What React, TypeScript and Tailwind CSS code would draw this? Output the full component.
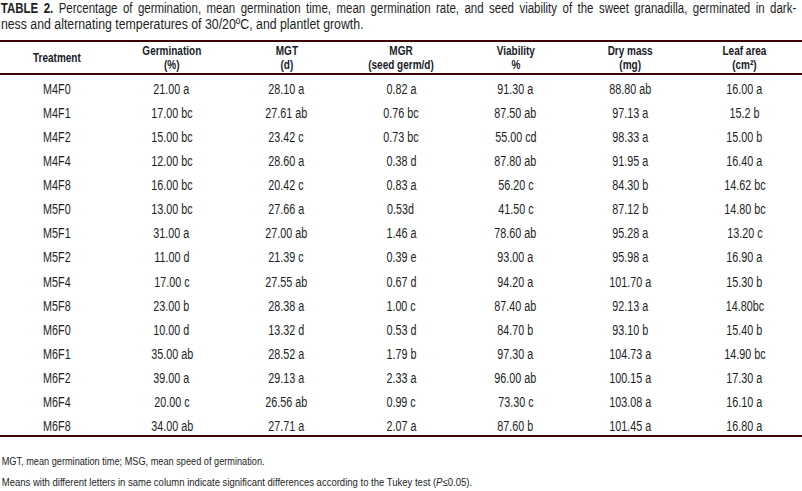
import React from "react";

const rows: string[][] = [
  ["M4F0", "21.00 a", "28.10 a", "0.82 a", "91.30 a", "88.80 ab", "16.00 a"],
  ["M4F1", "17.00 bc", "27.61 ab", "0.76 bc", "87.50 ab", "97.13 a", "15.2 b"],
  ["M4F2", "15.00 bc", "23.42 c", "0.73 bc", "55.00 cd", "98.33 a", "15.00 b"],
  ["M4F4", "12.00 bc", "28.60 a", "0.38 d", "87.80 ab", "91.95 a", "16.40 a"],
  ["M4F8", "16.00 bc", "20.42 c", "0.83 a", "56.20 c", "84.30 b", "14.62 bc"],
  ["M5F0", "13.00 bc", "27.66 a", "0.53d", "41.50 c", "87.12 b", "14.80 bc"],
  ["M5F1", "31.00 a", "27.00 ab", "1.46 a", "78.60 ab", "95.28 a", "13.20 c"],
  ["M5F2", "11.00 d", "21.39 c", "0.39 e", "93.00 a", "95.98 a", "16.90 a"],
  ["M5F4", "17.00 c", "27.55 ab", "0.67 d", "94.20 a", "101.70 a", "15.30 b"],
  ["M5F8", "23.00 b", "28.38 a", "1.00 c", "87.40 ab", "92.13 a", "14.80bc"],
  ["M6F0", "10.00 d", "13.32 d", "0.53 d", "84.70 b", "93.10 b", "15.40 b"],
  ["M6F1", "35.00 ab", "28.52 a", "1.79 b", "97.30 a", "104.73 a", "14.90 bc"],
  ["M6F2", "39.00 a", "29.13 a", "2.33 a", "96.00 ab", "100.15 a", "17.30 a"],
  ["M6F4", "20.00 c", "26.56 ab", "0.99 c", "73.30 c", "103.08 a", "16.10 a"],
  ["M6F8", "34.00 ab", "27.71 a", "2.07 a", "87.60 b", "101.45 a", "16.80 a"],
];

const headers: [string, string][] = [
  ["Treatment", ""],
  ["Germination", "(%)"],
  ["MGT", "(d)"],
  ["MGR", "(seed germ/d)"],
  ["Viability", "%"],
  ["Dry mass", "(mg)"],
  ["Leaf area", "(cm²)"],
];

export default function App() {
  return (
    <div
      className="w-[802px] h-[491px] bg-white overflow-hidden text-[#1e1e1e]"
      style={{ fontFamily: '"Liberation Sans", Arial, sans-serif' }}
    >
      {/* Caption: Arial-Narrow look via horizontal condensing */}
      <div className="text-[14px] leading-[16px]">
        <p className="w-[971px] pl-[1px] origin-top-left scale-x-[0.82] text-justify [text-align-last:justify]">
          <span className="font-bold">TABLE 2.</span> Percentage of germination, mean germination time, mean germination rate, and seed viability of the sweet granadilla, germinated in dark-
        </p>
        <p className="w-[900px] pl-[1px] origin-top-left scale-x-[0.88]">
          ness and alternating temperatures of 30/20ºC, and plantlet growth.
        </p>
      </div>
      <div className="mt-[8px] border-t-2 border-b-2 border-[#3a0606]">
        <div className="grid grid-cols-7 h-[33px] items-center border-b-2 border-[#3a0606] font-bold text-[12.5px] leading-[14px] text-[#1a1a28]">
          {headers.map(([a, b]) => (
            <div key={a} className="flex justify-center">
              <span className="inline-block text-center whitespace-nowrap scale-x-[0.8]">
                <span className="block">{a}</span>
                {b && <span className="block">{b}</span>}
              </span>
            </div>
          ))}
        </div>
        <div className="pt-[2px] mb-[-3px]">
          {rows.map((r) => (
            <div key={r[0]} className="grid grid-cols-7 h-[24.07px] items-center text-[14px] leading-[16px]">
              {r.map((c, i) => (
                <div key={i} className="flex justify-center">
                  <span className="inline-block whitespace-nowrap scale-x-[0.77]">{c}</span>
                </div>
              ))}
            </div>
          ))}
        </div>
      </div>
      <div className="text-[11px] leading-[14px] mt-[17px]">
        <p className="w-[950px] pl-[2px] origin-top-left scale-x-[0.835]">
          MGT, mean germination time; MSG, mean speed of germination.
        </p>
        <p className="w-[950px] pl-[2px] origin-top-left scale-x-[0.865] mt-[7px]">
          Means with different letters in same column indicate significant differences according to the Tukey test (<i>P</i>≤0.05).
        </p>
      </div>
    </div>
  );
}
